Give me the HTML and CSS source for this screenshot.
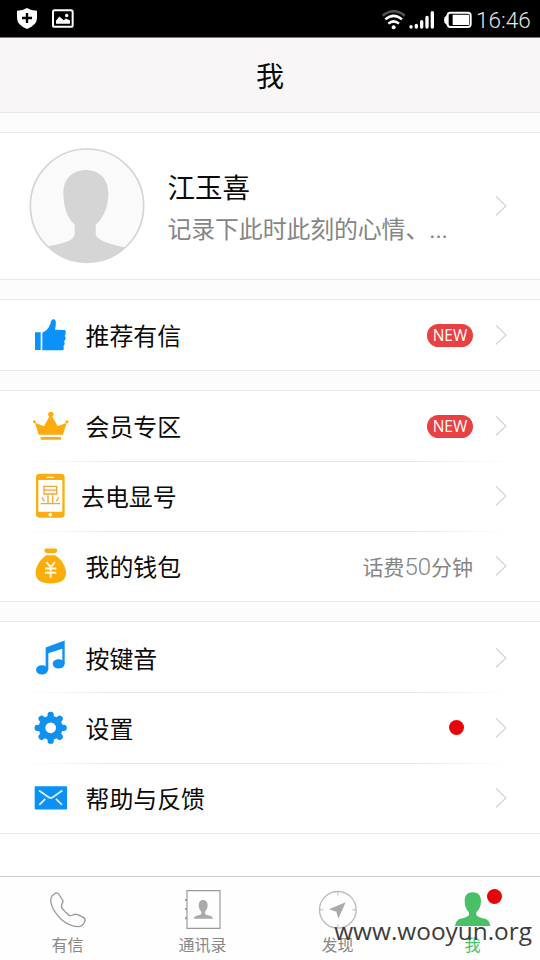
FILE: index.html
```html
<!DOCTYPE html>
<html lang="zh-CN">
<head>
<meta charset="utf-8">
<title>我</title>
<link rel="stylesheet" href="styles.css">
</head>
<body>
<svg class="defs" width="0" height="0">
  <symbol id="chevron" viewBox="0 0 12 22"><path d="M1.2 1.5 11 11 .8 20.5" fill="none" stroke="#d2d2d2" stroke-width="1.1"/></symbol>
</svg>
<div class="status">
  <div class="status-side">
    <svg width="20" height="21" viewBox="51 24 60 63"><path fill="#fff" d="M81 24Q93 32 111 32V55Q110 76 81 87Q52 76 51 55V32Q69 32 81 24Z"/><path d="M81 39V69M66 54H96" stroke="#000" stroke-width="7"/></svg>
    <svg width="22" height="19" viewBox="156 29 66 56"><rect x="159" y="32" width="59" height="50" rx="5" fill="none" stroke="#fff" stroke-width="6"/><path fill="#fff" d="M168 73V64L178 51 191 62 198 57 210 63V73Z"/><circle cx="200" cy="48" r="5" fill="#fff"/></svg>
  </div>
  <div class="status-side status-right">
    <svg width="24" height="20" viewBox="36 28 72 60" fill="none" stroke-width="7.500"><path d="M38 45Q71 19 104 45" stroke="#555"/><path d="M46 56Q71 35 96 56M55 69Q71 55 87 69" stroke="#fff"/><circle cx="71" cy="80" r="6" fill="#fff"/></svg>
    <svg class="signal" width="26" height="18" viewBox="119 33 78 54" stroke="#fff" stroke-width="10" stroke-linecap="round"><path d="M125 80V81M141 76V81M157 65V81M173 52V81M189 38V81"/></svg>
    <svg class="battery" width="28" height="18" viewBox="223 34 84 54"><rect x="234" y="39" width="69" height="43" rx="8" fill="none" stroke="#fff" stroke-width="6"/><path fill="#fff" d="M234 43 229 49Q223 51 223 61Q223 71 229 73L234 79ZM249 45H298V76H249Z"/></svg>
    <span class="clock">16:46</span>
  </div>
</div>
<header class="title">我</header>
<main class="content">
  <section class="card profile">
    <svg class="avatar" width="116" height="116" viewBox="89 68 348 348">
      <clipPath id="face"><circle cx="263" cy="241" r="170"/></clipPath>
      <circle cx="263" cy="241" r="170" fill="#fafafa"/>
      <path clip-path="url(#face)" fill="#d5d5d5" d="M260 134C299 134 327 160 327 203C327 246 313 277 289 298V325C291 345 334 357 382 367V430H140V364C188 354 225 348 226 325V298C205 280 192 246 192 203C192 160 220 134 260 134Z"/>
      <circle cx="263" cy="241" r="170" fill="none" stroke="#d5d5d5" stroke-width="5"/>
    </svg>
    <div class="who"><div class="name">江玉喜</div><div class="mood">记录下此时此刻的心情、...</div></div>
    <svg class="chev"><use href="#chevron"/></svg>
  </section>

  <section class="card card-single">
    <div class="row">
      <svg class="icon" viewBox="90 75 120 120" fill="#0a91fb"><path d="M105 127H122V180H105ZM127 128C141 123 149 112 153 94Q155 87 162 88C170 90 168 107 165 119L194 120Q199 122 197 131L194 137Q199 141 196 149L192 154Q196 159 193 166L190 169Q194 178 188 181H127Z"/></svg>
      <span class="label">推荐有信</span><span class="new">NEW</span><svg class="chev"><use href="#chevron"/></svg>
    </div>
  </section>

  <section class="card card-member">
    <div class="row">
      <svg class="icon" viewBox="90 346 120 120" fill="#fdab0d"><path d="M116 432 105 396 132 407 149 376H156L173 407 200 396 189 432ZM122 439H183V447H122Z"/><circle cx="152.500" cy="371" r="8"/><circle cx="103" cy="393" r="4.500"/><circle cx="201" cy="393" r="4.500"/></svg>
      <span class="label">会员专区</span><span class="new">NEW</span><svg class="chev"><use href="#chevron"/></svg>
    </div>
    <div class="row">
      <svg class="icon icon-tall" viewBox="90 63 120 150"><path fill="#fbad13" fill-rule="evenodd" d="M118 71H184Q194 71 194 81V193Q194 203 184 203H118Q108 203 108 193V81Q108 71 118 71ZM115 90V185H187V90Z"/><path d="M141 82H160" stroke="#fff" stroke-width="4" stroke-linecap="round"/><circle cx="151" cy="194" r="5.500" fill="#fff"/><path d="M132 109H170V132H132ZM132 120.500H170M144 136V159M158 136V159M126 142 133 154M176 142 169 154M122 161H180" fill="none" stroke="#f3a536" stroke-width="4"/></svg>
      <span class="label label-near">去电显号</span><svg class="chev"><use href="#chevron"/></svg>
    </div>
    <div class="row">
      <svg class="icon" viewBox="90 289.500 120 120"><path fill="#fbad0c" d="M137 297H167Q174 299 171 305Q168 311 162 311H142Q136 311 133 304Q131 299 137 297ZM139 317H165C183 328 198 349 198 370C198 393 181 402 153 402C124 402 107 393 107 370C107 349 122 328 139 317Z"/><path d="M139 338 152 353 165 338M152 352V385M135 357H169M135 370H169" fill="none" stroke="#fff8df" stroke-width="6"/></svg>
      <span class="label">我的钱包</span><span class="value">话费<span class="digits">50</span>分钟</span><svg class="chev"><use href="#chevron"/></svg>
    </div>
  </section>

  <section class="card card-settings">
    <div class="row">
      <svg class="icon" viewBox="90 22.500 120 120" fill="#0f91f2"><ellipse cx="126" cy="118" rx="18" ry="14"/><ellipse cx="176" cy="100" rx="18" ry="14"/><path d="M137 51 194 30V100H187V55L145 68V118H137Z"/></svg>
      <span class="label">按键音</span><svg class="chev"><use href="#chevron"/></svg>
    </div>
    <div class="row">
      <svg class="icon" viewBox="90 234 120 120"><g stroke="#0f91f2" stroke-width="19" stroke-linecap="round"><path d="M152 255V332M113 293.500H191M125 266.500 179 320.500M179 266.500 125 320.500"/></g><circle cx="152" cy="293.500" r="36" fill="#0f91f2"/><circle cx="152" cy="293.500" r="16" fill="#fff"/></svg>
      <span class="label">设置</span><span class="dot"></span><svg class="chev"><use href="#chevron"/></svg>
    </div>
    <div class="row">
      <svg class="icon" viewBox="90 445.500 120 120"><rect x="104" y="470" width="97" height="70" rx="3" fill="#0b90f5"/><path d="M117 483 146 503Q152 507 158 503L187 483M118 526 136 508M186 526 168 508" fill="none" stroke="#dff1ff" stroke-width="5.500"/></svg>
      <span class="label">帮助与反馈</span><svg class="chev"><use href="#chevron"/></svg>
    </div>
  </section>
</main>
<nav class="tabs">
  <div class="tab">
    <svg class="tab-icon" viewBox="144 75 120 120"><path d="M168 84Q174 82 178 90L189 107Q190 112 186 117Q182 123 187 131Q197 144 208 151Q213 153 218 150Q226 146 233 149L250 157Q258 162 254 170Q248 185 233 185Q208 183 185 164Q156 137 152 108Q151 92 168 84Z" fill="none" stroke="#999" stroke-width="4"/></svg>
    <span>有信</span>
  </div>
  <div class="tab">
    <svg class="tab-icon" viewBox="549 75 120 120"><path d="M561 77H660V190H561Z" fill="none" stroke="#999" stroke-width="3.500"/><path d="M555 105H561M555 132H561M555 160H561" stroke="#999" stroke-width="6"/><path fill="#aaa" d="M609 105C618 105 623 111 623 121C623 130 619 136 615 140V146Q618 150 630 152Q638 154 639 161H581Q582 154 590 152Q602 150 604 146V140C600 136 596 130 596 121C596 111 601 105 609 105Z"/></svg>
    <span>通讯录</span>
  </div>
  <div class="tab">
    <svg class="tab-icon" viewBox="144 75 120 120"><circle cx="203.500" cy="134.500" r="55" fill="none" stroke="#bbb" stroke-width="4"/><path d="M203.500 80V91M203.500 178V189M149 134.500H160M247 134.500H258" stroke="#bbb" stroke-width="3"/><path d="M227 112 177 133 199 140 205 161Z" fill="#aaa"/></svg>
    <span>发现</span>
  </div>
  <div class="tab tab-on">
    <svg class="tab-icon" viewBox="549 75 120 120"><path fill="#49bf66" d="M608 82C624 82 633 92 633 108C633 124 627 135 619 142V150Q622 157 645 161Q659 165 661 183H555Q557 165 571 161Q594 157 597 150V142C589 135 584 124 584 108C584 92 592 82 608 82Z"/></svg>
    <span>我</span>
    <i class="dot badge"></i>
  </div>
</nav>
<div class="watermark">www.wooyun.org</div>
</body>
</html>
```

FILE: styles.css
```css
* { box-sizing: border-box; }
body {
  margin: 0;
  width: 540px;
  height: 960px;
  position: relative;
  display: flex;
  flex-direction: column;
  overflow: hidden;
  background: #fefefe;
  color: #0a0a0a;
  font-family: Roboto, "Noto Sans CJK SC", sans-serif;
}
svg { display: block; flex: none; }
.defs { position: absolute; }
.status {
  flex: none;
  height: 38px;
  padding: 0 9px 0 17px;
  display: flex;
  justify-content: space-between;
  align-items: center;
  background: #000;
  border-bottom: 1px solid #777;
}
.status-side { display: flex; align-items: center; gap: 15px; }
.status-right { gap: 0; padding-top: 3px; }
.signal { margin-left: 3px; }
.battery { margin-left: 9px; }
.clock { margin-left: 4px; color: #e4e4e4; font-size: 22.5px; line-height: 26px; font-weight: 300; width: 55px; white-space: nowrap; }
.title {
  flex: none;
  height: 75px;
  line-height: 75px;
  text-align: center;
  font-size: 28px;
  font-family: "Noto Sans CJK SC", sans-serif;
  background: #f8f6f7;
  border-bottom: 1px solid #eaeaea;
}
.content {
  flex: none;
  height: 763px;
  padding-top: 19px;
  display: flex;
  flex-direction: column;
  gap: 19px;
  background: #fcfcfc;
}
.card {
  flex: none;
  display: flex;
  flex-direction: column;
  background: #fff;
  border-top: 1px solid #e9e9e9;
  border-bottom: 1px solid #e9e9e9;
}
.card-single { height: 72px; }
.card-member { height: 212px; }
.card-settings { height: 213px; box-shadow: 0 44px 0 #fff; }
.profile { height: 148px; padding: 0 33px 0 29px; flex-direction: row; align-items: center; }
.who { margin-left: 22.5px; padding-top: 5px; flex: 1; }
.name { font-size: 27.5px; line-height: 40px; }
.mood { font-size: 23.9px; line-height: 36px; margin-top: 3px; color: #858585; white-space: nowrap; letter-spacing: -0.1px; }
.chev { width: 12px; height: 22px; }
.row {
  flex: 1;
  padding: 0 33px 0 30px;
  display: flex;
  align-items: center;
}
.card-settings .row { padding-top: 1px; }
.row + .row {
  background: linear-gradient(90deg, transparent 4%, #e6e6e6 25%, #e6e6e6 75%, transparent 95%) top / 100% 1px no-repeat;
}
.icon { width: 40px; height: 40px; }
.icon-tall { height: 50px; }
.label { margin-left: 15.5px; margin-right: auto; padding-top: 4px; font-size: 23.9px; line-height: 36px; }
.label-near { margin-left: 11px; }
.new {
  width: 46px;
  height: 23px;
  margin-right: 22px;
  border-radius: 12px;
  background: #e94043;
  color: #fff;
  text-align: center;
  font: 15.5px/23px "Open Sans", sans-serif;
}
.value { margin-right: 22px; padding-top: 3px; font-size: 21px; line-height: 32px; color: #858585; }
.digits { font-size: 24px; font-weight: 300; line-height: 1; }
.dot { width: 15px; height: 15px; border-radius: 50%; background: #e60509; }
.row .dot { margin-right: 31px; }
.tabs { flex: none; height: 84px; display: flex; background: #fefefe; border-top: 1px solid #ccc; }
.tab {
  position: relative;
  flex: 1;
  display: flex;
  flex-direction: column;
  align-items: center;
  padding-top: 13px;
  font-size: 16px;
  line-height: 24px;
  color: #888;
}
.tab-icon { width: 40px; height: 40px; margin-bottom: 4px; }
.tab-on { color: #49bf66; }
.badge { position: absolute; left: 82px; top: 12px; }
.watermark {
  position: absolute;
  right: 8px;
  bottom: 12px;
  font: 24.4px/34px "Open Sans", sans-serif;
  color: #3c3c3c;
}
```
